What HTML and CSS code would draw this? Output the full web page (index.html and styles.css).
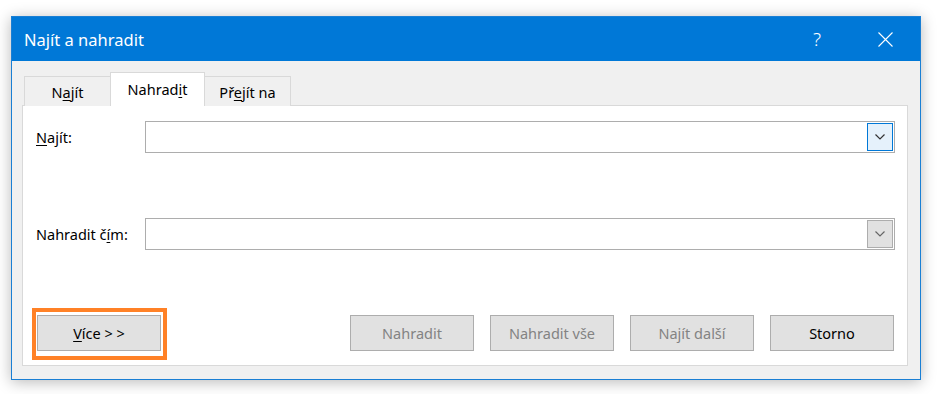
FILE: index.html
```html
<html><head>
<meta charset="UTF-8">
<meta name="viewport" content="width=device-width, initial-scale=1.0">
<title>Najít a nahradit</title>
<link rel="stylesheet" href="styles.css">
</head>
<body>
  <div class="dialog">
    <div class="titlebar">
      <span class="title">Najít a nahradit</span>
      <span class="help">?</span>
      <span class="close">
        <svg width="15" height="15" viewBox="0 0 15 15"><path d="M0.5 0.5 L14.5 14.5 M14.5 0.5 L0.5 14.5" stroke="#fff" stroke-width="1.1" fill="none"/></svg>
      </span>
    </div>

    <div class="body">
      <ul class="tabs">
        <li class="tab">N<u>a</u>jít</li>
        <li class="tab active">Nahrad<u>i</u>t</li>
        <li class="tab">Př<u>e</u>jít na</li>
      </ul>

      <div class="panel">
        <div class="field-row">
          <label class="field-label"><u>N</u>ajít:</label>
          <div class="combo">
            <div class="combo-text"></div>
            <div class="combo-drop focused">
              <svg width="10" height="6" viewBox="0 0 10 6"><polyline points="0.5,0.5 5,5 9.5,0.5" stroke="#333" stroke-width="1.2" fill="none"/></svg>
            </div>
          </div>
        </div>

        <div class="field-row">
          <label class="field-label">Nahradit č<u>í</u>m:</label>
          <div class="combo">
            <div class="combo-text"></div>
            <div class="combo-drop">
              <svg width="10" height="6" viewBox="0 0 10 6"><polyline points="0.5,0.5 5,5 9.5,0.5" stroke="#666" stroke-width="1.2" fill="none"/></svg>
            </div>
          </div>
        </div>

        <div class="button-row">
          <div class="more">
            <button class="btn"><u>V</u>íce &gt; &gt;</button>
            <span class="highlight"></span>
          </div>
          <div class="actions">
            <button class="btn disabled">Nahradit</button>
            <button class="btn disabled">Nahradit vše</button>
            <button class="btn disabled">Najít další</button>
            <button class="btn">Storno</button>
          </div>
        </div>
      </div>
    </div>
  </div>
</body></html>
```

FILE: styles.css
```css
body {
  font-family: 'Segoe UI', 'Noto Sans', sans-serif;
  margin: 0;
  padding: 0;
  background-color: #fff;
  color: #000;
}
u {
  text-decoration-thickness: 1px;
  text-underline-offset: 2px;
}
.dialog {
  width: 908px;
  margin: 16px 0 0 11px;
  border: 1px solid #1a7fd4;
  background-color: #f0f0f0;
  box-shadow: 0 2px 14px rgba(0,0,0,0.28);
}
.titlebar {
  height: 44px;
  background-color: #0078d7;
  color: white;
  display: flex;
  align-items: center;
  padding-left: 12px;
}
.title {
  font-size: 16.5px;
  flex-grow: 1;
}
.help {
  font-size: 19px;
  font-weight: 300;
  margin-right: 57px;
}
.close {
  display: flex;
  margin-right: 27px;
}
.body {
  padding: 11px 12px 13px 10px;
}
.tabs {
  list-style-type: none;
  margin: 0 0 -1px 2px;
  padding: 0;
  display: flex;
  align-items: flex-end;
  position: relative;
}
.tab {
  font-size: 14.5px;
  height: 30px;
  box-sizing: border-box;
  width: 87px;
  padding-top: 5px;
  text-align: center;
  border: 1px solid #d9d9d9;
  border-bottom: none;
  margin-right: -1px;
  background-color: #f0f0f0;
}
.tab.active {
  height: 34px;
  width: 95px;
  padding-top: 6px;
  background-color: white;
  position: relative;
  z-index: 1;
}
.panel {
  background-color: white;
  border: 1px solid #d9d9d9;
  padding: 15px 12px 14px 13px;
  display: flex;
  flex-direction: column;
  gap: 65px;
}
.field-row {
  display: flex;
  align-items: center;
}
.field-label {
  font-size: 14.5px;
  width: 109px;
  flex-shrink: 0;
}
.combo {
  flex-grow: 1;
  height: 32px;
  box-sizing: border-box;
  border: 1px solid #adadad;
  display: flex;
  padding: 1px;
}
.combo-text {
  flex-grow: 1;
}
.combo-drop {
  width: 26px;
  box-sizing: border-box;
  border: 1px solid #adadad;
  background-color: #e1e1e1;
  display: flex;
  align-items: center;
  justify-content: center;
}
.combo-drop.focused {
  border-color: #0078d7;
  background-color: #e5f1fb;
}
.button-row {
  display: flex;
  justify-content: space-between;
  padding-left: 1px;
}
.more {
  position: relative;
}
.highlight {
  position: absolute;
  top: -7px;
  left: -5px;
  right: -6px;
  bottom: -9px;
  border: 4px solid #ff8126;
}
.actions {
  display: flex;
  gap: 16px;
  margin-right: 1px;
}
.btn {
  font-family: inherit;
  font-size: 14.5px;
  width: 124px;
  height: 36px;
  background-color: #e1e1e1;
  border: 1px solid #adadad;
  color: #000;
  padding: 0;
}
.btn.disabled {
  color: #838383;
}
```
